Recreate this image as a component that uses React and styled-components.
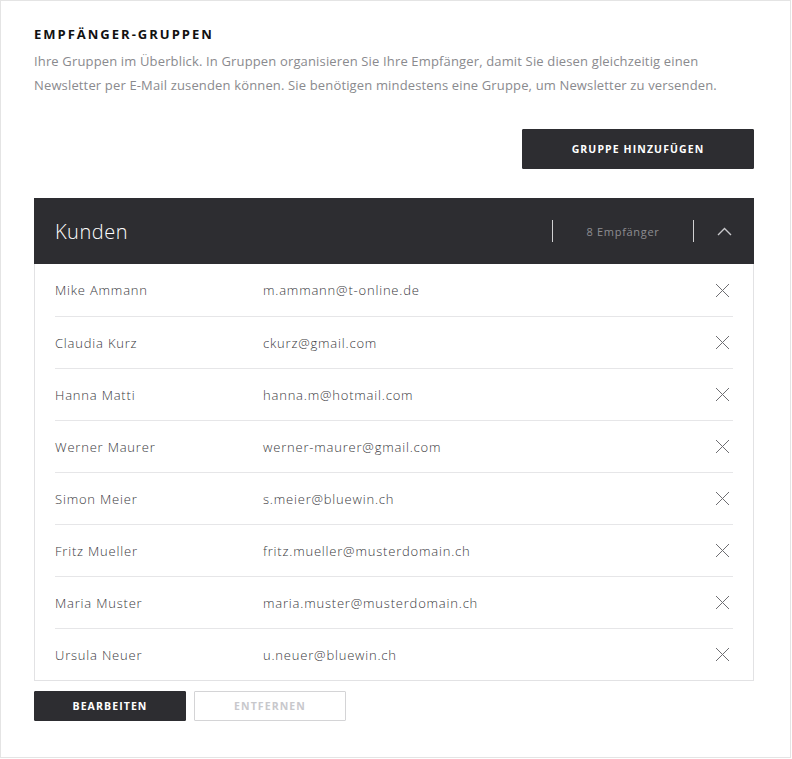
import React from 'react';
import styled, { createGlobalStyle } from 'styled-components';

const GlobalStyle = createGlobalStyle`
  html, body {
    margin: 0;
    padding: 0;
    background: #ffffff;
  }
  body {
    font-family: "Open Sans", "Liberation Sans", sans-serif;
  }
`;

const Frame = styled.div`
  box-sizing: border-box;
  width: 791px;
  height: 758px;
  border: 1px solid #e4e4e4;
  padding: 24px 36px 0 33px;
`;

const Heading = styled.h1`
  margin: 0;
  font-size: 13px;
  line-height: 18px;
  font-weight: 700;
  letter-spacing: 2px;
  color: #111;
  text-transform: uppercase;
`;

const Intro = styled.p`
  margin: 6px 0 0;
  font-size: 13px;
  line-height: 24px;
  font-weight: 400;
  letter-spacing: 0.15px;
  color: #8a8a8e;
`;

const Actions = styled.div`
  display: flex;
  justify-content: ${(p) => (p.end ? 'flex-end' : 'flex-start')};
  gap: 8px;
  margin-top: ${(p) => p.top}px;
`;

const Button = styled.button`
  box-sizing: border-box;
  width: ${(p) => p.w}px;
  height: ${(p) => p.h}px;
  border: 1px solid ${(p) => (p.ghost ? '#d4d4d6' : '#2d2d31')};
  border-radius: 1px;
  background: ${(p) => (p.ghost ? '#ffffff' : '#2d2d31')};
  color: ${(p) => (p.ghost ? '#c8c8cc' : '#ffffff')};
  font-family: inherit;
  font-size: 10.5px;
  font-weight: 700;
  letter-spacing: 1.1px;
  text-transform: uppercase;
  cursor: pointer;
`;

const Group = styled.section`
  margin-top: 29px;
`;

const GroupHeader = styled.header`
  display: flex;
  align-items: center;
  height: 66px;
  padding: 0 22px 0 21px;
  background: #2d2d31;
  color: #ffffff;
`;

const GroupTitle = styled.h2`
  flex: 1;
  margin: 0;
  font-size: 20px;
  font-weight: 300;
  letter-spacing: 0.5px;
`;

const Divider = styled.span`
  width: 1px;
  height: 22px;
  background: #d0d0d2;
`;

const Count = styled.span`
  width: 140px;
  text-align: center;
  font-size: 11px;
  letter-spacing: 0.7px;
  color: #8d8d92;
`;

const Toggle = styled.button`
  display: flex;
  align-items: center;
  justify-content: flex-end;
  width: 38px;
  height: 22px;
  padding: 0;
  border: 0;
  background: none;
  cursor: pointer;
`;

const List = styled.ul`
  margin: 0;
  padding: 0 20px;
  list-style: none;
  border: 1px solid #e2e2e4;
  border-top: 0;
`;

const Row = styled.li`
  display: flex;
  align-items: center;
  height: 52px;
  box-sizing: border-box;
  border-top: ${(p) => (p.first ? '0' : '1px solid #e6e6e8')};
  font-size: 13px;
  font-weight: 300;
  letter-spacing: 0.8px;
  color: #3a3a3e;
`;

const Name = styled.span`
  width: 208px;
`;

const Email = styled.span`
  flex: 1;
`;

const Remove = styled.button`
  display: flex;
  padding: 0;
  margin-right: 3px;
  border: 0;
  background: none;
  cursor: pointer;
`;

const CloseIcon = () => (
  <svg width="15" height="15" viewBox="0 0 15 15">
    <path d="M1 1L14 14M14 1L1 14" stroke="#6e6e72" strokeWidth="1" fill="none" />
  </svg>
);

const ChevronUp = () => (
  <svg width="15" height="9" viewBox="0 0 15 9">
    <path d="M1 8L7.5 1.5L14 8" stroke="#c9c9cc" strokeWidth="1.4" fill="none" />
  </svg>
);

const recipients = [
  ['Mike Ammann', 'm.ammann@t-online.de'],
  ['Claudia Kurz', 'ckurz@gmail.com'],
  ['Hanna Matti', 'hanna.m@hotmail.com'],
  ['Werner Maurer', 'werner-maurer@gmail.com'],
  ['Simon Meier', 's.meier@bluewin.ch'],
  ['Fritz Mueller', 'fritz.mueller@musterdomain.ch'],
  ['Maria Muster', 'maria.muster@musterdomain.ch'],
  ['Ursula Neuer', 'u.neuer@bluewin.ch'],
];

export default function App() {
  return (
    <>
      <GlobalStyle />
      <Frame>
        <Heading>Empfänger-Gruppen</Heading>
        <Intro>
          Ihre Gruppen im Überblick. In Gruppen organisieren Sie Ihre Empfänger, damit Sie diesen gleichzeitig einen
          Newsletter per E-Mail zusenden können. Sie benötigen mindestens eine Gruppe, um Newsletter zu versenden.
        </Intro>
        <Actions end top={32}>
          <Button w={232} h={40}>Gruppe hinzufügen</Button>
        </Actions>
        <Group>
          <GroupHeader>
            <GroupTitle>Kunden</GroupTitle>
            <Divider />
            <Count>8 Empfänger</Count>
            <Divider />
            <Toggle aria-label="Einklappen">
              <ChevronUp />
            </Toggle>
          </GroupHeader>
          <List>
            {recipients.map(([name, email], i) => (
              <Row key={email} first={i === 0}>
                <Name>{name}</Name>
                <Email>{email}</Email>
                <Remove aria-label="Entfernen">
                  <CloseIcon />
                </Remove>
              </Row>
            ))}
          </List>
        </Group>
        <Actions top={10}>
          <Button w={152} h={30}>Bearbeiten</Button>
          <Button w={152} h={30} ghost>Entfernen</Button>
        </Actions>
      </Frame>
    </>
  );
}
